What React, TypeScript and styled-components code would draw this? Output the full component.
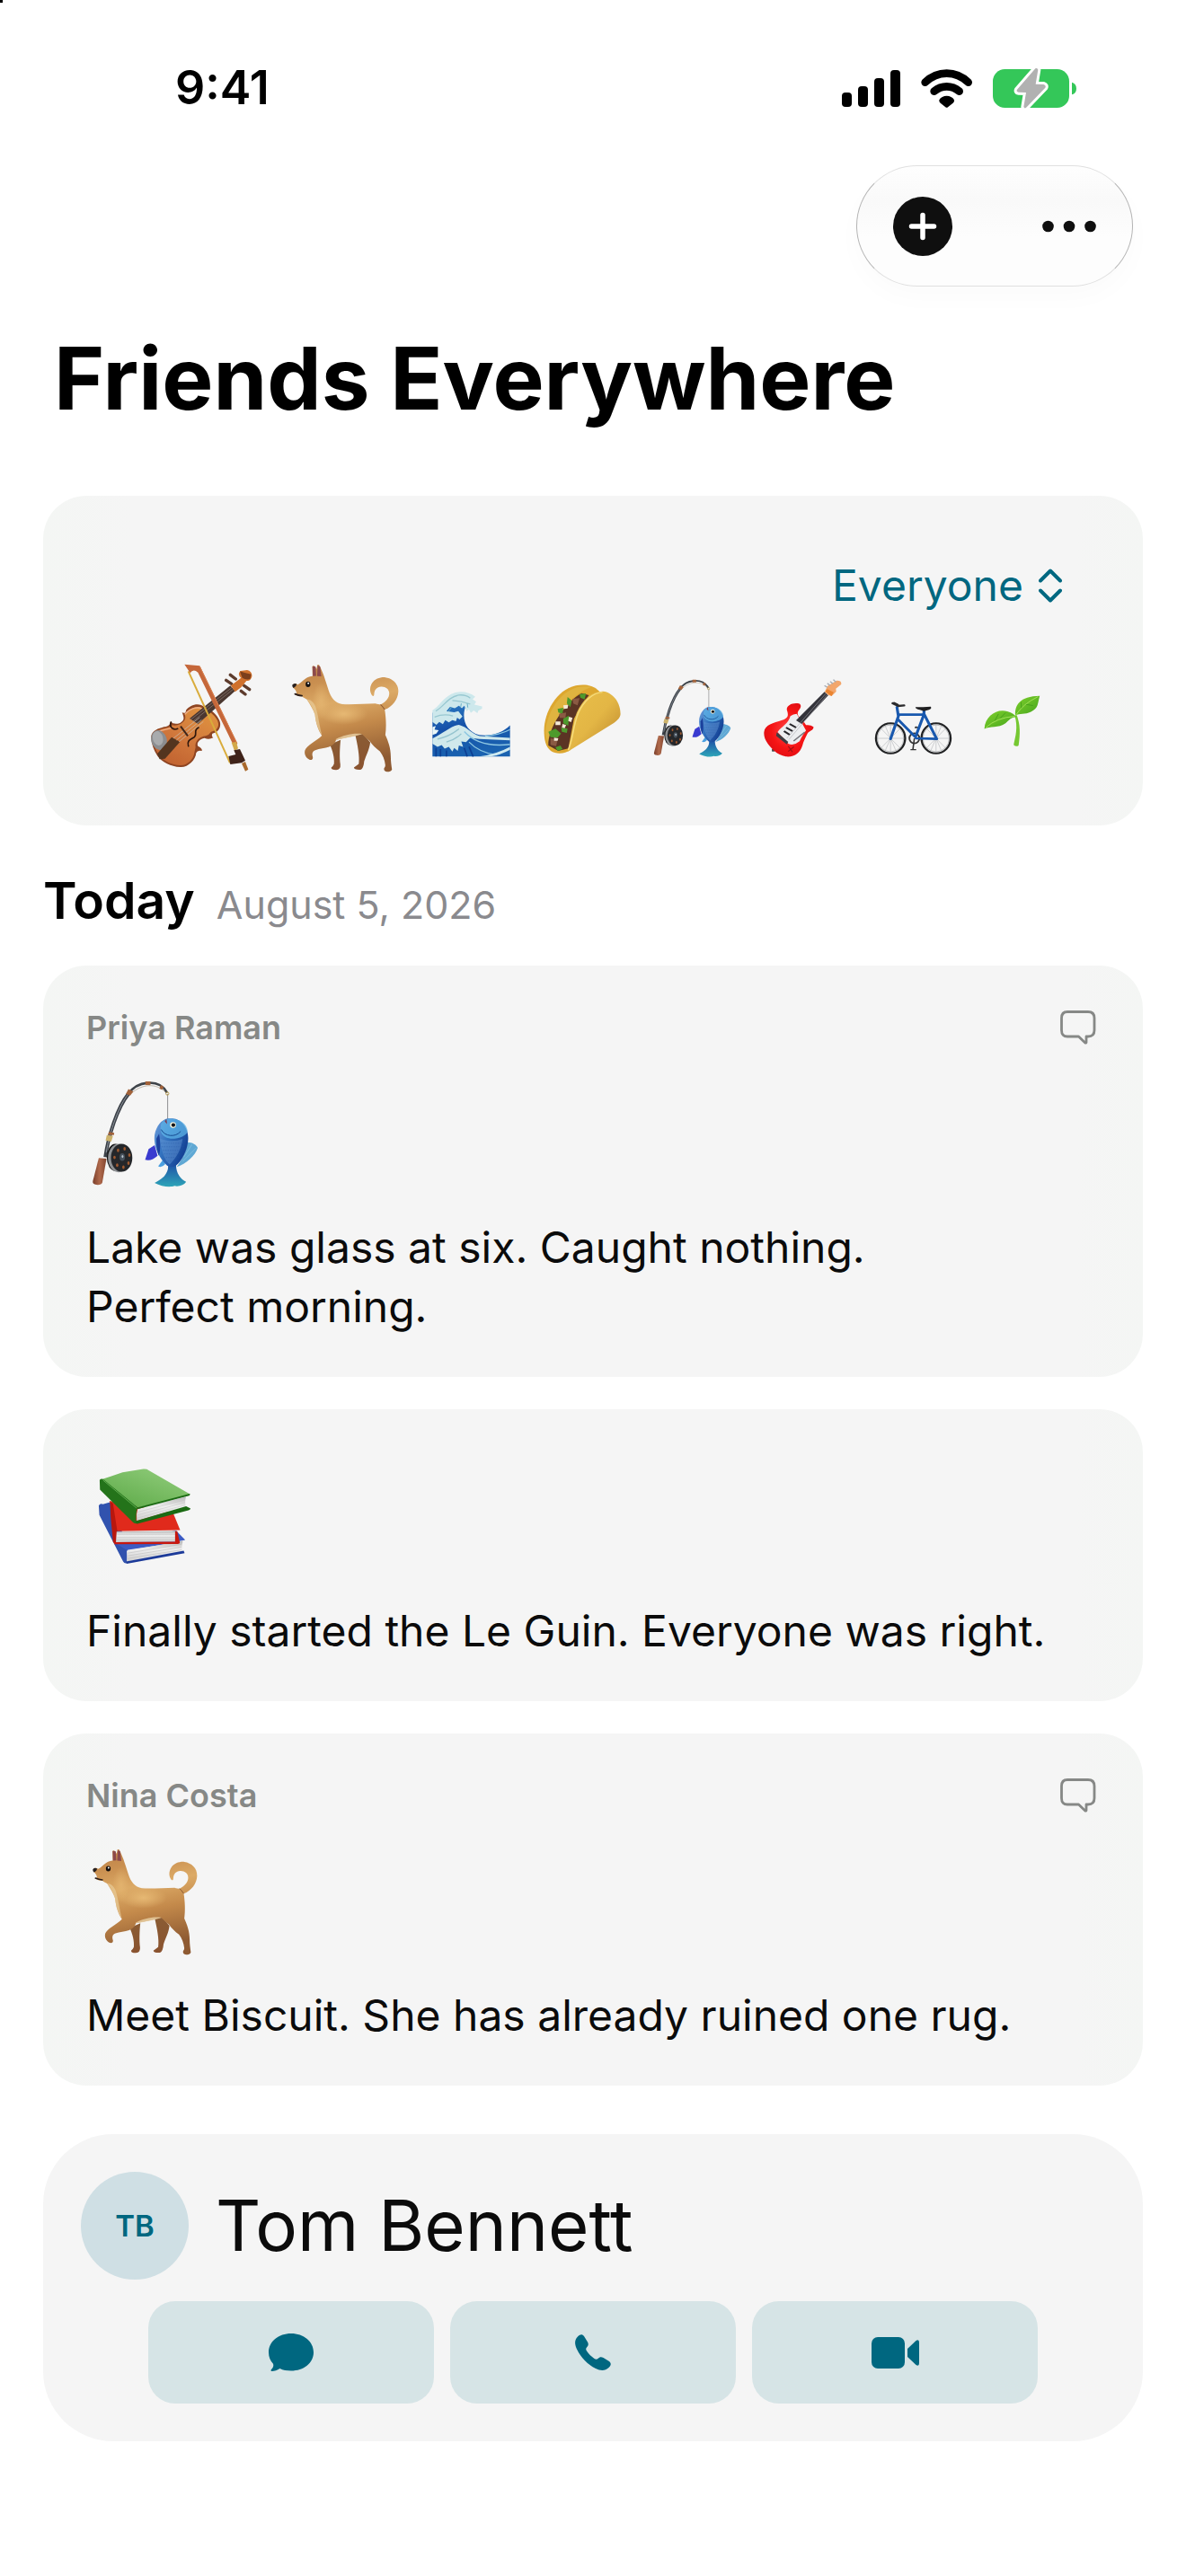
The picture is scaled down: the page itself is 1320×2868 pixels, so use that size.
import React from "react";
import styled, { createGlobalStyle } from "styled-components";

const ink = "#0b0b0b";
const teal = "#006780";
const muted = "#868886";

const GlobalStyle = createGlobalStyle`
  * { box-sizing: border-box; }
  body {
    margin: 0;
    background: #ffffff;
    color: #000000;
    font-family: Inter, "Liberation Sans", sans-serif;
  }
  h1, h2, h3, p { margin: 0; }
  button, select {
    font: inherit;
    color: inherit;
    border: 0;
    padding: 0;
    background: none;
    cursor: pointer;
  }
  svg { display: block; flex: none; }
`;

const CornerMark = styled.span`
  position: absolute;
  top: 0;
  left: 0;
  width: 3px;
  height: 3px;
  background: #000000;
`;

const Screen = styled.div`
  min-height: 100vh;
  padding: 66px 48px 150px;
`;

const StatusBar = styled.header`
  display: flex;
  align-items: center;
  justify-content: space-between;
  padding: 0 74px 0 147px;
`;

const Clock = styled.time`
  font-size: 52px;
  line-height: 64px;
  font-weight: 600;
`;

const StatusIcons = styled.div`
  display: flex;
  align-items: center;
  gap: 23px;
`;

const Toolbar = styled.div`
  display: flex;
  justify-content: flex-end;
  margin-top: 54px;
  padding-right: 11px;
`;

const ToolbarPill = styled.div`
  display: flex;
  align-items: center;
  justify-content: space-between;
  width: 308px;
  height: 135px;
  padding: 0 40px;
  border: 1px solid;
  border-color: #e0e0e0 #b4b4b4;
  border-radius: 68px;
  background: linear-gradient(#fefefe, #f9f9f9 30%, #fdfdfd 60%, #fdfdfd);
  box-shadow: 0 12px 30px rgba(0, 0, 0, 0.02);
`;

const IconButton = styled.button<{ $quiet?: boolean }>`
  display: flex;
  color: ${(p) => (p.$quiet ? muted : "#0f0f0f")};
`;

const Title = styled.h1`
  margin-top: 42px;
  padding-left: 12px;
  font-size: 96px;
  line-height: 120px;
  font-weight: 700;
`;

const Card = styled.section`
  border-radius: 48px;
  background: linear-gradient(90deg, #f4f6f4, #f5f5f5 8%, #f5f5f5 94%, #f4f6f4);
`;

const FilterCard = styled(Card)`
  margin-top: 71px;
  padding: 67px 90px 59px 119px;
`;

const FilterRow = styled.div`
  display: flex;
  justify-content: flex-end;
`;

const SelectBox = styled.label`
  display: grid;
  align-items: center;
  color: ${teal};

  & > * { grid-area: 1 / 1; }
  & > svg { justify-self: end; pointer-events: none; }
`;

const Select = styled.select`
  appearance: none;
  padding-right: 43px;
  font-size: 48px;
  line-height: 66px;
  height: 66px;
`;

const EmojiRow = styled.div`
  display: flex;
  align-items: center;
  gap: 36px;
  margin-top: 54px;
`;

const DayHeading = styled.div`
  display: flex;
  align-items: baseline;
  gap: 24px;
  margin: 48px 0 36px;
`;

const Day = styled.h2`
  font-size: 57px;
  line-height: 72px;
  font-weight: 600;
`;

const DayDate = styled.time`
  font-size: 43px;
  color: #8a8a8e;
`;

const Feed = styled.main`
  display: grid;
  gap: 36px;
`;

const Post = styled(Card)<{ $bare?: boolean }>`
  padding: ${(p) => (p.$bare ? 61 : 46)}px 48px 45px;
`;

const PostHeader = styled.div`
  display: flex;
  align-items: center;
  justify-content: space-between;
  height: 45px;
  margin-bottom: 37px;
  padding-right: 4px;
  color: ${muted};
`;

const Author = styled.h3`
  font-size: 36px;
  line-height: 44px;
  font-weight: 600;
`;

const PostEmoji = styled.div`
  padding-left: 6px;
`;

const PostText = styled.p`
  max-width: 1110px;
  margin-top: 34px;
  font-size: 48px;
  line-height: 66px;
  color: ${ink};
  white-space: pre-line;
`;

const ContactCard = styled.section`
  margin-top: 54px;
  padding: 42px;
  border-radius: 78px;
  background: #f5f5f5;
`;

const Person = styled.div`
  display: flex;
  align-items: center;
  gap: 30px;
`;

const Avatar = styled.span`
  display: grid;
  place-items: center;
  width: 120px;
  height: 120px;
  border-radius: 50%;
  background: #cfdfe4;
  color: ${teal};
  font-size: 33px;
  font-weight: 600;
`;

const PersonName = styled.h2`
  font-size: 78px;
  line-height: 100px;
  font-weight: 400;
  color: ${ink};
`;

const Actions = styled.div`
  display: grid;
  grid-template-columns: repeat(3, 1fr);
  gap: 18px;
  margin-top: 24px;
  padding: 0 75px;
`;

const ActionButton = styled.button`
  display: grid;
  place-items: center;
  height: 114px;
  border-radius: 30px;
  background: #d6e4e6;
  color: ${teal};
`;

/* ---------- status and control icons ---------- */

const Signal = () => (
  <svg width="65" height="41" viewBox="0 0 65 41" aria-hidden="true">
    <rect x="0" y="25" width="11" height="16" rx="4" />
    <rect x="18" y="18" width="11" height="23" rx="4" />
    <rect x="36" y="9" width="11" height="32" rx="4" />
    <rect x="54" y="0" width="11" height="41" rx="4" />
  </svg>
);

const Wifi = () => (
  <svg width="57" height="43" viewBox="375 75 171 129" aria-hidden="true">
    <g fill="none" stroke="#000" strokeWidth="26" strokeLinecap="round">
      <path d="M389 119 C431 79 491 79 533 119" />
      <path d="M419 149 C444 128 478 128 503 149" />
    </g>
    <path d="M436 178 C445 160 477 160 486 178 Q487 184 482 188 L465 202 Q461 205 457 202 L440 188 Q435 184 436 178 Z" />
  </svg>
);

const Battery = () => (
  <svg width="93" height="45" viewBox="615 75 279 135" aria-hidden="true">
    <rect x="615" y="78" width="255" height="129" rx="40" fill="#34c759" />
    <path d="M879 122 Q894 127 894 143 Q894 159 879 163 Z" fill="#34c759" />
    <path
      d="M757 76 L696 146 Q692 154 701 155 L726 156 L718 204 Q722 212 728 205 L790 140 Q794 132 785 129 L758 128 L766 80 Q762 72 757 76 Z"
      fill="#b1b1b1"
      stroke="#fff"
      strokeWidth="18"
      strokeLinejoin="round"
      paintOrder="stroke"
    />
  </svg>
);

const PlusCircle = () => (
  <svg width="66" height="66" viewBox="0 0 66 66" aria-hidden="true">
    <circle cx="33" cy="33" r="33" fill="currentColor" />
    <path d="M33 20.5V45.5M20.5 33H45.5" stroke="#fff" strokeWidth="5.5" strokeLinecap="round" />
  </svg>
);

const Dots = () => (
  <svg width="60" height="66" viewBox="0 0 60 66" fill="currentColor" aria-hidden="true">
    <circle cx="6.5" cy="33" r="6.3" />
    <circle cx="30" cy="33" r="6.3" />
    <circle cx="53.5" cy="33" r="6.3" />
  </svg>
);

const UpDown = () => (
  <svg width="26" height="38" viewBox="0 0 26 38" fill="none" stroke="currentColor" strokeWidth="4" strokeLinecap="round" strokeLinejoin="round" aria-hidden="true">
    <path d="M2 13.5L13 2.5L24 13.5M2 24.5L13 35.5L24 24.5" />
  </svg>
);

const Comment = () => (
  <svg width="40" height="38" viewBox="0 0 40 38" fill="none" stroke="currentColor" strokeWidth="2.8" strokeLinejoin="round" aria-hidden="true">
    <path d="M8 1.500H31Q38 1.500 38 8.500V22Q38 29 31 29H29V35.500Q28.500 36.500 27.500 35.800L20.500 29H8Q1.500 29 1.500 22V8.500Q1.500 1.500 8 1.500Z" />
  </svg>
);

const Bubble = () => (
  <svg width="50" height="42" viewBox="0 0 50 42" fill="currentColor" aria-hidden="true">
    <path d="M25 0C39 0 50 9 50 21C50 33 39 41.5 25 41.5C20 41.5 16 40.8 12.5 39C9.5 41 6.5 42 3.5 42C2.3 42 2.2 40.8 3 40C5 38 5.8 36 5 33.8C1.8 30.5 0 26 0 21C0 9 11 0 25 0Z" />
  </svg>
);

const Phone = () => (
  <svg width="40" height="40" viewBox="0 0 40 40" fill="currentColor" aria-hidden="true">
    <path d="M3 2.5C5.5 0 8 -0.5 10 2L14 8.5C15.2 10.8 15 12.5 13 14.5C11.8 15.8 12 17 13 18.5C15.5 22 18 24.5 21.5 27C23 28 24.3 28 25.5 27C27.5 24.9 29.2 24.8 31.5 26L38 30C40.5 32 40.3 34.5 37.5 37C33.5 41 28 40.5 23 38C14 33.5 6.5 25.8 2.3 17C-0.5 11.5 -1 6.5 3 2.5Z" />
  </svg>
);

const Video = () => (
  <svg width="53" height="35" viewBox="0 0 53 35" fill="currentColor" aria-hidden="true">
    <rect width="37" height="35" rx="7" />
    <path d="M40 13L49.5 4Q53 2 53 6V29Q53 33 49.5 31L40 22Z" />
  </svg>
);

/* ---------- emoji artwork ---------- */

type Art = { size: number };

const Dog = ({ size }: Art) => (
  <svg width={size} height={size} viewBox="67 82 358 360" role="img" aria-label="Dog">
    <defs>
      <linearGradient id="dogCoat" x1="0" y1="0" x2="0.2" y2="1">
        <stop offset="0" stopColor="#bd8147" />
        <stop offset="0.2" stopColor="#c98f50" />
        <stop offset="0.42" stopColor="#dcaa66" />
        <stop offset="0.65" stopColor="#c48a4b" />
        <stop offset="1" stopColor="#8e5a32" />
      </linearGradient>
      <linearGradient id="dogFarLeg" x1="0" y1="0" x2="0" y2="1">
        <stop offset="0" stopColor="#8a5c34" />
        <stop offset="1" stopColor="#8a5330" />
      </linearGradient>
      <radialGradient id="dogGlow">
        <stop offset="0" stopColor="#e6b873" />
        <stop offset="1" stopColor="#e6b873" stopOpacity="0" />
      </radialGradient>
    </defs>
    <path d="M194 350L230 334C227 360 226 395 229 415Q231 432 215 434Q198 434 199 426Q206 420 208 414C210 395 204 370 194 350Z" fill="url(#dogFarLeg)" />
    <path d="M278 316L302 312L328 342C326 365 314 385 308 405Q306 430 296 433Q274 434 274 426Q282 420 290 414C294 390 286 350 278 316Z" fill="url(#dogFarLeg)" />
    <path
      d="M72 152C76 146 84 148 88 151C98 146 104 138 114 131C122 126 130 124 137 123L136 92Q141 84 147 94L150 100L153 86Q158 82 162 92L173 118C177 130 184 150 190 170C198 195 212 212 235 216C265 219 310 214 345 214C352 216 358 217 362 217C380 208 391 195 391 180C391 166 378 157 364 158C350 159 342 168 341 182C341 190 338 190 334 187C326 176 325 160 334 146C344 132 360 126 378 127C402 130 422 148 421 174C420 200 402 224 376 234C380 258 382 290 378 318C388 340 396 362 396 390C396 405 398 418 400 432Q396 440 384 440Q372 438 374 428Q378 424 378 418C376 400 370 385 360 372C346 362 334 350 326 338C316 330 308 322 300 315C275 322 245 328 215 334C212 345 205 352 192 357C178 362 160 362 146 368C136 372 134 380 138 392Q138 402 128 400C116 396 108 382 112 368C118 352 150 338 168 320C155 300 148 280 145 250C140 235 128 215 118 200C112 196 106 195 102 190C92 190 84 188 79 183L84 180C84 172 78 165 72 160Z"
      fill="url(#dogCoat)"
    />
    <ellipse cx="240" cy="248" rx="80" ry="36" fill="url(#dogGlow)" />
    <ellipse cx="165" cy="205" rx="28" ry="60" fill="url(#dogGlow)" opacity="0.7" />
    <path d="M118 200C132 215 140 232 145 252C148 280 156 300 168 318C160 290 156 250 146 222C140 208 130 200 118 200Z" fill="#e8cc98" opacity="0.7" />
    <path d="M214 332C240 318 275 310 302 315C275 324 240 330 214 334Z" fill="#ead2a6" opacity="0.8" />
    <path d="M137 90L147 92L149 122L138 123ZM154 88L162 92L166 124L152 123Z" fill="#8d4a4c" />
    <path d="M70 152Q76 145 84 149Q84 158 74 162Q69 160 70 152Z" fill="#27201f" />
    <path d="M79 182Q90 187 102 188" stroke="#2a1c18" strokeWidth="5" fill="none" strokeLinecap="round" />
    <ellipse cx="122" cy="150" rx="8" ry="9" fill="#15100e" />
    <circle cx="123" cy="147" r="3" fill="#fff" />
    <path d="M362 217Q368 222 376 234" stroke="#8e5a32" strokeWidth="3" fill="none" />
  </svg>
);

const Fishing = ({ size }: Art) => (
  <svg width={size} height={size} viewBox="67 67 358 360" role="img" aria-label="Fishing pole">
    <defs>
      <linearGradient id="fishBody" x1="0" y1="0" x2="1" y2="0.6">
        <stop offset="0" stopColor="#6f9fdc" />
        <stop offset="0.45" stopColor="#3474c0" />
        <stop offset="1" stopColor="#123f93" />
      </linearGradient>
      <linearGradient id="fishTail" x1="0" y1="0" x2="0" y2="1">
        <stop offset="0" stopColor="#1d4fa6" />
        <stop offset="1" stopColor="#2ea5b8" />
      </linearGradient>
      <linearGradient id="rodGrip" x1="0" y1="0" x2="1" y2="0">
        <stop offset="0" stopColor="#7a3f2b" />
        <stop offset="0.5" stopColor="#b06a4c" />
        <stop offset="1" stopColor="#82452f" />
      </linearGradient>
    </defs>
    <path d="M112 325C122 255 152 158 190 112" fill="none" stroke="#3c4148" strokeWidth="12" />
    <path d="M115 310C126 240 158 150 190 112" fill="none" stroke="#8f969e" strokeWidth="3" />
    <path d="M188 114C218 68 292 58 320 108" fill="none" stroke="#3f444a" strokeWidth="8" />
    <path d="M200 110C235 78 285 74 316 108" fill="none" stroke="#8a7a63" strokeWidth="1.5" />
    <path d="M322 112V198" stroke="#8d8d90" strokeWidth="3" />
    <circle cx="321" cy="111" r="5" fill="none" stroke="#b89a4a" strokeWidth="3" />
    <path d="M190 96L206 104L196 118L181 112ZM247 70H264V82H247ZM299 82L309 88L303 98L294 94Z" fill="#a2623a" />
    <path d="M124 240L142 243L141 251L121 249Z" fill="#a2623a" />
    <path d="M117 251L138 254L132 273L113 269Z" fill="#cdb36c" />
    <ellipse cx="146" cy="326" rx="29" ry="46" fill="#141516" />
    <ellipse cx="157" cy="328" rx="36" ry="48" fill="#8e9194" />
    <ellipse cx="167" cy="327" rx="36" ry="47" fill="#25272a" />
    <g fill="#a0592f">
      <ellipse cx="177" cy="297" rx="4" ry="6" />
      <ellipse cx="155" cy="302" rx="4" ry="6" />
      <ellipse cx="143" cy="326" rx="4" ry="6" />
      <ellipse cx="152" cy="352" rx="4" ry="6" />
      <ellipse cx="173" cy="359" rx="4" ry="6" />
      <ellipse cx="190" cy="345" rx="4" ry="6" />
      <ellipse cx="193" cy="318" rx="4" ry="6" />
    </g>
    <ellipse cx="169" cy="325" rx="9" ry="13" fill="#47515c" />
    <ellipse cx="170" cy="323" rx="3" ry="5" fill="#b9c3cc" />
    <path d="M90 328L116 330L102 410Q98 420 82 418Q68 416 70 406Z" fill="url(#rodGrip)" />
    <path d="M278 285L258 298L246 334C262 338 275 332 288 320Z" fill="#3a3bd0" />
    <path d="M388 275C405 275 420 284 423 294C415 320 385 348 352 358C370 335 385 305 388 275Z" fill="#5fa8d4" />
    <path d="M418 294L372 340M404 282L376 325" stroke="#8cc5e4" strokeWidth="2" />
    <path d="M306 334L290 356Q302 362 314 348Z" fill="#4a9fe0" />
    <path d="M322 346C326 362 322 375 310 390C296 402 284 408 278 412C300 424 330 428 345 422C360 426 378 418 384 408C366 400 350 380 350 350Z" fill="url(#fishTail)" />
    <path d="M322 195C300 200 284 220 278 250C274 285 288 322 320 354Q334 362 350 354C372 335 390 300 391 262C392 228 368 196 338 195Z" fill="url(#fishBody)" />
    <path d="M296 262C300 300 308 330 328 350C350 330 368 300 372 264C345 274 320 272 296 262Z" fill="#5d8fd0" opacity="0.55" />
    <g stroke="#2b5dab" strokeWidth="2" strokeDasharray="4 4" opacity="0.7">
      <path d="M300 278H374M302 290H376M306 302H370M310 314H366M316 326H358M322 338H348" />
    </g>
    <path d="M300 212C290 250 315 264 345 263C372 260 390 248 389 236C386 212 362 196 338 196C322 194 308 200 300 212Z" fill="#5cb2e6" opacity="0.75" />
    <path d="M300 232C312 256 348 260 366 238" fill="none" stroke="#15498f" strokeWidth="3" />
    <path d="M284 262C284 290 286 306 292 320C300 300 296 262 293 246Z" fill="#1b409c" />
    <path d="M312 205L320 214L318 196Z" fill="#7b3b54" />
    <circle cx="340" cy="217" r="10" fill="#f3f1da" />
    <circle cx="341" cy="217" r="6.5" fill="#14151a" />
  </svg>
);

const Books = ({ size }: Art) => (
  <svg width={size} height={size} viewBox="67 52 358 360" role="img" aria-label="Books">
    <defs>
      <linearGradient id="bookGreen" x1="0" y1="1" x2="0.8" y2="0">
        <stop offset="0" stopColor="#5aa845" />
        <stop offset="1" stopColor="#8fcb79" />
      </linearGradient>
      <linearGradient id="bookPages" x1="0" y1="0" x2="0" y2="1">
        <stop offset="0" stopColor="#b8b8b8" />
        <stop offset="0.4" stopColor="#efefef" />
        <stop offset="1" stopColor="#cfcfcf" />
      </linearGradient>
    </defs>
    <path d="M90 192Q94 184 104 187L130 180L188 330L184 386Q176 388 172 380L92 224Z" fill="#3152ae" />
    <path d="M145 318L350 276L381 308L300 324L184 342Z" fill="#3c5bc4" />
    <path d="M184 344L373 311Q368 330 372 348L186 380Z" fill="url(#bookPages)" />
    <path d="M188 352L368 322M188 361L368 332M187 370L369 341" stroke="#b5b5b5" strokeWidth="1.5" />
    <path d="M182 380L376 344L379 352L184 388Z" fill="#1c3a99" />
    <path d="M126 176L340 216L364 274L152 278Z" fill="#e02a1c" />
    <path d="M128 182Q134 178 138 186L152 276L148 320Q142 322 138 314L130 230Z" fill="#b8170e" />
    <path d="M150 280L352 277L347 314L148 315Z" fill="url(#bookPages)" />
    <path d="M152 290H348M152 299H348M152 307H348" stroke="#bdbdbd" strokeWidth="1.5" />
    <path d="M347 278H354L363 316Q363 321 356 321L142 322V315L347 314Z" fill="#c8180f" />
    <path d="M98 104Q130 94 170 80L240 69Q252 68 258 73L397 153Q396 158 390 159L221 199Z" fill="url(#bookGreen)" />
    <path d="M93 106Q98 99 106 104L221 198Q213 220 217 252Q210 254 204 247L94 138Z" fill="#24731a" />
    <path d="M104 106L217 200" stroke="#60ad4f" strokeWidth="3" />
    <path d="M221 203L384 162Q378 180 384 195L218 243Q215 222 221 203Z" fill="url(#bookPages)" />
    <path d="M220 214L380 173M219 224L380 182M219 234L381 190" stroke="#c3c3c3" strokeWidth="1.5" />
    <path d="M214 244L384 194L399 202Q398 207 392 208L220 253Q214 254 214 244ZM221 198L397 152L396 158L220 204Z" fill="#1b6a13" />
  </svg>
);

const Violin = ({ size }: Art) => (
  <svg width={size} height={size} viewBox="80 117 363 363" role="img" aria-label="Violin">
    <defs>
      <linearGradient id="violinBody" x1="0.8" y1="0" x2="0.2" y2="1">
        <stop offset="0" stopColor="#e0943f" />
        <stop offset="0.5" stopColor="#d27a3d" />
        <stop offset="1" stopColor="#c0612f" />
      </linearGradient>
    </defs>
    <path d="M348 154L366 168M334 172L352 184M384 208L398 219M394 190L412 203" stroke="#5d3b2c" strokeWidth="10" strokeLinecap="round" />
    <path
      d="M84 365C82 345 100 335 120 330C140 325 148 325 148 310Q160 322 180 315C195 305 195 300 187 280Q200 285 200 272C215 252 245 245 262 262C290 270 320 305 314 325C312 340 300 348 288 350Q284 358 291 364Q276 372 262 365C246 368 234 380 240 392Q256 400 253 408Q238 404 234 415C232 440 205 465 180 462C150 460 120 445 105 425C92 405 85 385 84 365Z"
      fill="#8f4522"
    />
    <path
      d="M90 362C90 346 104 339 122 334C142 329 152 328 154 322Q166 326 182 318C198 308 200 300 196 286C208 268 238 252 258 266C286 276 312 305 308 322C306 336 296 342 284 344Q276 356 266 358C244 360 228 378 232 396Q230 404 228 414C225 438 202 458 180 456C152 454 125 442 110 422C97 404 90 382 90 362Z"
      fill="url(#violinBody)"
    />
    <path d="M96 350C106 340 135 338 156 330M196 286C210 268 236 258 254 268" stroke="#f0b088" strokeWidth="4" fill="none" />
    <path d="M212 300L348 190L364 208L240 318Z" fill="#4a3730" />
    <path d="M215 304L354 196M222 310L358 202" stroke="#a99b90" strokeWidth="1.5" />
    <path d="M350 190L384 164Q370 152 382 141L404 138Q422 142 420 160Q416 176 402 174L384 196L364 211Z" fill="#d0712d" />
    <path d="M380 142Q400 150 418 152L414 168Q400 172 388 164Z" fill="#7c3f1c" />
    <ellipse cx="110" cy="372" rx="26" ry="33" fill="#8b8d90" transform="rotate(-15 110 372)" />
    <ellipse cx="106" cy="366" rx="17" ry="24" fill="#a9abad" transform="rotate(-15 106 366)" />
    <path d="M104 418L152 362L180 378L130 434L112 436Z" fill="#54351f" />
    <path d="M158 366L246 296M168 372L252 304M176 378L258 310" stroke="#c8c2b8" strokeWidth="2" />
    <path d="M182 326L206 358" stroke="#3e2519" strokeWidth="6" />
    <path d="M150 312C142 330 160 340 172 334M242 330C222 340 240 352 228 362C216 370 202 372 208 392" stroke="#2c160d" strokeWidth="5" fill="none" strokeLinecap="round" />
    <path d="M208 142L347 448" stroke="#d9ac3c" strokeWidth="6" />
    <path d="M195 119L246 124L372 384L360 392L240 146Q224 132 214 148Z" fill="#c5673a" />
    <path d="M246 126L370 382" stroke="#d9814f" strokeWidth="3" />
    <path d="M352 380L368 378L374 400L362 408Z" fill="#d3a94a" />
    <path d="M360 406L380 402L398 440L386 448L348 453L342 426L366 420Z" fill="#3f231a" />
    <path d="M386 450L398 444L408 470L398 476Z" fill="#a9692c" />
  </svg>
);

const Wave = ({ size }: Art) => (
  <svg width={size} height={size} viewBox="1022 168 263 263" role="img" aria-label="Wave">
    <defs>
      <linearGradient id="waveDeep" x1="0" y1="0" x2="0.3" y2="1">
        <stop offset="0" stopColor="#2f7fc4" />
        <stop offset="0.5" stopColor="#1450a8" />
        <stop offset="1" stopColor="#1a62b0" />
      </linearGradient>
    </defs>
    <path d="M1023 429V282C1050 262 1090 238 1136 256C1118 300 1135 345 1180 356C1225 362 1260 348 1284 324V429Z" fill="url(#waveDeep)" />
    <path
      d="M1023 273C1045 262 1060 225 1100 213Q1140 206 1167 228L1158 236L1170 244L1164 254L1190 260V268L1178 274L1174 283L1162 274L1152 282L1146 270L1138 276L1130 258L1122 266L1112 258L1098 266L1082 262L1070 276L1096 280L1110 276L1124 294L1114 304L1106 298L1102 310L1090 306L1078 314L1066 306L1058 320L1046 312L1036 322L1023 312Z"
      fill="#cde8ec"
    />
    <path d="M1034 276C1060 262 1075 228 1112 222Q1135 220 1150 232M1090 240L1120 244L1150 252M1030 296Q1060 284 1092 292" stroke="#98c8d1" strokeWidth="4" fill="none" />
    <path d="M1088 262L1076 278M1120 250L1118 262M1140 250L1142 264" stroke="#6aaec6" strokeWidth="3" />
    <path d="M1023 330L1034 326L1030 338L1044 340L1036 352L1023 356Z" fill="#eaf7f7" />
    <path d="M1023 368C1060 352 1080 328 1112 322C1142 330 1150 350 1182 360L1284 366V374L1180 370L1150 366L1136 380L1120 378L1126 396L1112 392L1108 410L1096 400L1090 412L1078 396L1064 402L1054 390L1040 396L1023 386Z" fill="#d0e9ec" />
    <path d="M1040 370Q1080 362 1112 336M1070 380Q1100 372 1120 352" stroke="#95c4cf" strokeWidth="4" fill="none" />
    <path d="M1130 345Q1180 400 1284 388M1146 380Q1180 416 1240 424M1284 338Q1250 356 1200 360" stroke="#8cc6e2" strokeWidth="4" fill="none" />
    <path d="M1180 429Q1240 420 1284 396V406Q1250 424 1220 429Z" fill="#cfeaf0" />
    <path d="M1050 429V404M1070 429V408M1035 429V400M1140 429L1130 400M1160 429L1146 396" stroke="#0d3f93" strokeWidth="5" />
  </svg>
);

const Taco = ({ size }: Art) => (
  <svg width={size} height={size} viewBox="62 168 220 261" preserveAspectRatio="none" role="img" aria-label="Taco">
    <defs>
      <linearGradient id="tacoShell" x1="0" y1="0" x2="1" y2="1">
        <stop offset="0" stopColor="#e9bf4a" />
        <stop offset="0.5" stopColor="#e3b645" />
        <stop offset="1" stopColor="#b9832a" />
      </linearGradient>
    </defs>
    <path d="M66 340C66 280 100 205 155 190C180 184 205 188 222 210L140 405C125 418 100 420 85 408C70 395 66 370 66 340Z" fill="#dda72f" />
    <path d="M70 345C74 285 105 215 158 196Q180 190 200 194Q120 225 84 370L92 404Q72 390 70 345Z" fill="#e0b440" />
    <path d="M78 390C76 330 130 240 172 215L192 222L150 300L134 400L106 408Z" fill="#5b3424" />
    <g fill="#4d9a2c">
      <path d="M132 228L144 240L140 262L130 250ZM166 218L184 216L180 236L168 230ZM104 268L120 264L118 284L106 280ZM120 300L136 290L134 324L120 316ZM78 344L98 334L114 350L104 364L84 362ZM114 330L132 334L130 348L116 344ZM98 396L112 390L118 402L104 408Z" />
    </g>
    <g fill="#8a5a43">
      <path d="M146 234L166 232L160 256L148 250ZM108 284L128 280L126 298L110 298ZM84 366L104 370L100 392L84 388Z" />
    </g>
    <g fill="#f4ead8">
      <path d="M120 256L134 254L132 266L122 268ZM98 310H112V322H98ZM136 294L146 298L142 312L134 308ZM118 318L128 322L124 332L116 330ZM94 364L106 366L104 374L94 374Z" />
    </g>
    <path d="M132 411C146 370 142 330 158 280C175 236 200 208 232 209C258 212 282 245 281 285C280 298 274 304 262 315Z" fill="url(#tacoShell)" />
    <path d="M134 405C148 366 146 330 162 282C178 240 204 214 230 212" stroke="#f6dc7c" strokeWidth="4" fill="none" />
  </svg>
);

const Guitar = ({ size }: Art) => (
  <svg width={size} height={size} viewBox="683 168 220 261" preserveAspectRatio="none" role="img" aria-label="Guitar">
    <defs>
      <radialGradient id="guitarBody">
        <stop offset="0" stopColor="#ff4a4a" />
        <stop offset="0.7" stopColor="#f51414" />
        <stop offset="1" stopColor="#e50f14" />
      </radialGradient>
    </defs>
    <path d="M706 402H714V410H706Z" fill="#444" />
    <path d="M684 345C686 320 710 315 735 305C755 298 752 285 748 270C748 255 765 246 782 250C792 256 786 266 780 275C776 285 780 296 790 300L802 322Q815 320 823 328C824 340 812 340 806 350C800 365 795 375 792 390C785 415 770 430 745 427C720 422 705 400 695 385C686 370 683 358 684 345Z" fill="url(#guitarBody)" />
    <path d="M722 345C735 325 752 318 758 292Q766 284 776 284L802 340C796 350 790 360 784 376Q768 392 752 384Z" fill="#eceef0" />
    <path d="M774 306L854 211L865 222L790 318Z" fill="#33333a" />
    <path d="M748 366L858 216M754 370L862 220" stroke="#aaaab0" strokeWidth="1.5" />
    <path d="M756 318L774 330M746 330L764 342M740 342L756 354" stroke="#26262a" strokeWidth="6" />
    <path d="M720 346L752 378L748 386L718 358Z" fill="#3e3e42" />
    <path d="M768 374L798 346" stroke="#77777c" strokeWidth="4" strokeLinecap="round" />
    <path d="M752 392L764 412M752 410L768 394" stroke="#9d1216" strokeWidth="3" />
    <path d="M855 211L862 192L888 173Q903 172 901 186L886 200L887 210L874 225L864 221Z" fill="#f3a66b" />
    <path d="M856 210L862 202L880 212L874 225Z" fill="#ea8430" />
    <path d="M854 190L862 196M862 182L870 190M870 176L878 184M879 170L886 178" stroke="#a9adb3" strokeWidth="4" />
  </svg>
);

const Bike = ({ size }: Art) => (
  <svg width={size} height={size} viewBox="994 168 220 261" preserveAspectRatio="none" role="img" aria-label="Bicycle">
    <g stroke="#a5a8ab" strokeWidth="1.4">
      <path d="M1040 318V414M1000 366H1080M1012 332L1068 400M1068 332L1012 400M1024 322L1056 410M1056 322L1024 410M1168 318V414M1128 366H1208M1140 332L1196 400M1196 332L1140 400M1152 322L1184 410M1184 322L1152 410" />
    </g>
    <g fill="none" stroke="#202123" strokeWidth="6">
      <ellipse cx="1040" cy="366" rx="41" ry="50" />
      <ellipse cx="1168" cy="366" rx="41" ry="50" />
    </g>
    <g fill="none" stroke="#8b8e92" strokeWidth="1.5">
      <ellipse cx="1040" cy="366" rx="37" ry="45" />
      <ellipse cx="1168" cy="366" rx="37" ry="45" />
    </g>
    <ellipse cx="1107" cy="366" rx="14" ry="17" fill="none" stroke="#333" strokeWidth="5" />
    <path d="M1107 366L1103 402M1096 404H1112M1112 332V326M1108 330H1120" stroke="#333" strokeWidth="4" />
    <g fill="none" stroke="#1858ae" strokeWidth="8" strokeLinejoin="round" strokeLinecap="round">
      <path d="M1058 262L1062 292L1040 368M1062 287H1130M1060 302L1110 362L1134 286M1134 284L1170 368L1112 366M1134 270V284" />
    </g>
    <path d="M1046 249L1062 258L1078 256M1050 248L1060 254" stroke="#2b2b2d" strokeWidth="7" fill="none" strokeLinecap="round" />
    <path d="M1110 262Q1132 262 1153 260Q1157 266 1148 271L1134 275L1122 271Q1110 268 1110 262Z" fill="#1f1f21" />
  </svg>
);

const Sprout = ({ size }: Art) => (
  <svg width={size} height={size} viewBox="1301 206 158 187" preserveAspectRatio="none" overflow="visible" role="img" aria-label="Seedling">
    <defs>
      <linearGradient id="leaf" x1="0" y1="0" x2="1" y2="1">
        <stop offset="0" stopColor="#7fd02d" />
        <stop offset="1" stopColor="#44a41c" />
      </linearGradient>
    </defs>
    <path d="M1386 290C1396 330 1388 360 1383 388Q1390 396 1397 390C1402 350 1402 320 1392 288Z" fill="#76c832" />
    <path d="M1300 334C1302 290 1335 265 1365 275Q1385 282 1390 294C1375 295 1370 305 1360 315C1340 332 1315 324 1300 334Z" fill="url(#leaf)" />
    <path d="M1388 290C1385 255 1400 224 1457 223C1450 250 1455 262 1432 277C1415 288 1400 280 1388 290Z" fill="url(#leaf)" />
    <path d="M1304 330Q1335 296 1386 292M1389 288Q1410 250 1452 226" stroke="#a9e45c" strokeWidth="2.5" fill="none" />
    <path d="M1330 306L1340 284M1345 298L1360 280M1405 264L1404 244M1418 252L1438 256" stroke="#3c9518" strokeWidth="2" fill="none" />
  </svg>
);

/* ---------- content ---------- */

const topEmoji: { Art: React.FC<Art>; size: number }[] = [
  { Art: Violin, size: 121 },
  { Art: Dog, size: 121 },
  { Art: Wave, size: 87 },
  { Art: Taco, size: 87 },
  { Art: Fishing, size: 87 },
  { Art: Guitar, size: 87 },
  { Art: Bike, size: 87 },
  { Art: Sprout, size: 62 },
];

const posts: { author?: string; Art: React.FC<Art>; text: string }[] = [
  { author: "Priya Raman", Art: Fishing, text: "Lake was glass at six. Caught nothing.\nPerfect morning." },
  { Art: Books, text: "Finally started the Le Guin. Everyone was right." },
  { author: "Nina Costa", Art: Dog, text: "Meet Biscuit. She has already ruined one rug." },
];

export default function App() {
  return (
    <>
      <GlobalStyle />
      <CornerMark />
      <Screen>
        <StatusBar>
          <Clock>9:41</Clock>
          <StatusIcons>
            <Signal />
            <Wifi />
            <Battery />
          </StatusIcons>
        </StatusBar>
        <Toolbar>
          <ToolbarPill>
            <IconButton type="button" aria-label="Add">
              <PlusCircle />
            </IconButton>
            <IconButton type="button" aria-label="More">
              <Dots />
            </IconButton>
          </ToolbarPill>
        </Toolbar>
        <Title>Friends Everywhere</Title>
        <FilterCard>
          <FilterRow>
            <SelectBox>
              <Select aria-label="Show posts from" defaultValue="Everyone">
                <option>Everyone</option>
                <option>Family</option>
                <option>Work</option>
              </Select>
              <UpDown />
            </SelectBox>
          </FilterRow>
          <EmojiRow>
            {topEmoji.map(({ Art, size }, i) => (
              <Art key={i} size={size} />
            ))}
          </EmojiRow>
        </FilterCard>
        <DayHeading>
          <Day>Today</Day>
          <DayDate dateTime="2026-08-05">August 5, 2026</DayDate>
        </DayHeading>
        <Feed>
          {posts.map(({ author, Art, text }) => (
            <Post key={text} $bare={!author}>
              {author && (
                <PostHeader>
                  <Author>{author}</Author>
                  <IconButton type="button" $quiet aria-label={`Reply to ${author}`}>
                    <Comment />
                  </IconButton>
                </PostHeader>
              )}
              <PostEmoji>
                <Art size={119} />
              </PostEmoji>
              <PostText>{text}</PostText>
            </Post>
          ))}
        </Feed>
        <ContactCard>
          <Person>
            <Avatar>TB</Avatar>
            <PersonName>Tom Bennett</PersonName>
          </Person>
          <Actions>
            <ActionButton type="button" aria-label="Message">
              <Bubble />
            </ActionButton>
            <ActionButton type="button" aria-label="Call">
              <Phone />
            </ActionButton>
            <ActionButton type="button" aria-label="Video call">
              <Video />
            </ActionButton>
          </Actions>
        </ContactCard>
      </Screen>
    </>
  );
}
